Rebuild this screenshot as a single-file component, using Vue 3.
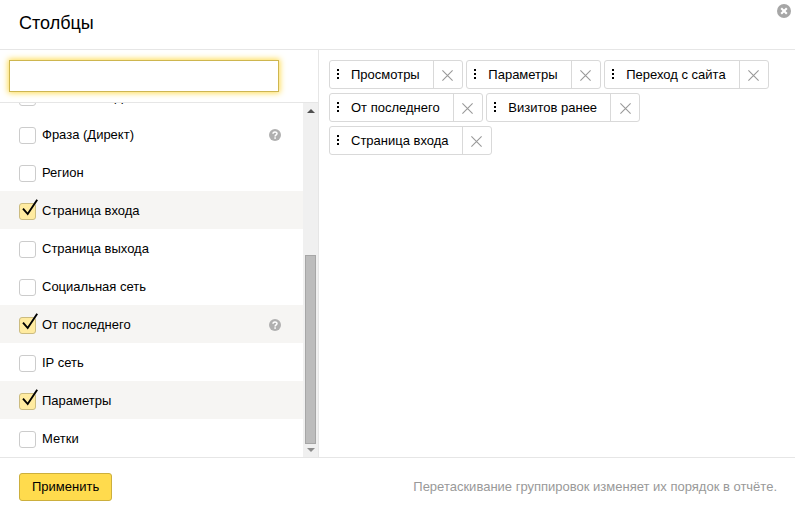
<script setup>
import { ref } from 'vue'

const query = ref('')

const options = ref([
  { label: 'Поисковая фраза', checked: false, hint: false },
  { label: 'Фраза (Директ)', checked: false, hint: true },
  { label: 'Регион', checked: false, hint: false },
  { label: 'Страница входа', checked: true, hint: false },
  { label: 'Страница выхода', checked: false, hint: false },
  { label: 'Социальная сеть', checked: false, hint: false },
  { label: 'От последнего', checked: true, hint: true },
  { label: 'IP сеть', checked: false, hint: false },
  { label: 'Параметры', checked: true, hint: false },
  { label: 'Метки', checked: false, hint: false },
])

const chips = ref([
  'Просмотры',
  'Параметры',
  'Переход с сайта',
  'От последнего',
  'Визитов ранее',
  'Страница входа',
])

function removeChip(name) {
  chips.value = chips.value.filter((c) => c !== name)
}
</script>

<template>
  <div class="dialog">
    <header class="header">
      <h1 class="title">Столбцы</h1>
      <button class="close" aria-label="Закрыть">
        <svg width="14" height="14" viewBox="0 0 14 14">
          <circle cx="7" cy="7" r="7" fill="#a6a6a6" />
          <path d="M4.2 4.2 L9.8 9.8 M9.8 4.2 L4.2 9.8" stroke="#fff" stroke-width="2.1" />
        </svg>
      </button>
    </header>

    <div class="body">
      <aside class="sidebar">
        <div class="search">
          <input v-model="query" class="search-input" type="text" />
        </div>
        <div class="scroller">
          <ul class="list">
            <li v-for="o in options" :key="o.label" class="row" :class="{ selected: o.checked }" @click="o.checked = !o.checked">
              <span class="box">
                <svg v-if="o.checked" class="tick" width="20" height="20" viewBox="0 0 20 20">
                  <path d="M4 9.6 L8.7 15 L18.2 0.8" fill="none" stroke="#000" stroke-width="1.9" />
                </svg>
              </span>
              <span class="label">{{ o.label }}</span>
              <svg v-if="o.hint" class="hint" width="12" height="12" viewBox="0 0 12 12">
                <circle cx="6" cy="6" r="6" fill="#b0b0b0" />
                <path d="M4 4.8 C4 2.3 8 2.3 8 4.6 C8 5.9 6.1 5.8 6.1 7.5" fill="none" stroke="#fff" stroke-width="1.5" />
                <rect x="5.3" y="8.3" width="1.6" height="1.5" fill="#fff" />
              </svg>
            </li>
          </ul>
          <div class="scrollbar">
            <svg class="arrow" width="8" height="4" viewBox="0 0 8 4"><path d="M0 4 L4 0 L8 4 Z" fill="#505050" /></svg>
            <div class="track"><div class="thumb"></div></div>
            <svg class="arrow" width="8" height="4" viewBox="0 0 8 4"><path d="M0 0 L8 0 L4 4 Z" fill="#8c8c8c" /></svg>
          </div>
        </div>
      </aside>

      <section class="chips">
        <div v-for="c in chips" :key="c" class="chip">
          <svg class="grip" width="2" height="10" viewBox="0 0 2 10">
            <path d="M0 0h2v2H0z M0 4h2v2H0z M0 8h2v2H0z" fill="#000" />
          </svg>
          <span class="chip-label">{{ c }}</span>
          <button class="remove" aria-label="Удалить" @click="removeChip(c)">
            <svg width="11" height="11" viewBox="0 0 11 11">
              <path d="M0.4 0.4 L10.6 10.6 M10.6 0.4 L0.4 10.6" stroke="#999" stroke-width="1.1" />
            </svg>
          </button>
        </div>
      </section>
    </div>

    <footer class="footer">
      <button class="apply">Применить</button>
      <span class="note">Перетаскивание группировок изменяет их порядок в отчёте.</span>
    </footer>
  </div>
</template>

<style>
body {
  margin: 0;
  overflow: hidden;
  background: #fff;
}
</style>

<style scoped>
.dialog {
  width: 795px;
  height: 514px;
  display: flex;
  flex-direction: column;
  background: #fff;
  color: #000;
  font: 13px/16px "Liberation Sans", Arial, sans-serif;
}
.dialog * {
  box-sizing: border-box;
}
button {
  margin: 0;
  padding: 0;
  border: 0;
  background: none;
  font: inherit;
  color: inherit;
}
.header {
  flex: none;
  height: 50px;
  padding: 4px 4px 0 19px;
  display: flex;
  justify-content: space-between;
  align-items: flex-start;
  border-bottom: 1px solid #e6e6e6;
}
.title {
  margin: 8px 0 0;
  font-size: 18px;
  line-height: 22px;
  font-weight: normal;
}
.close {
  display: flex;
}
.body {
  flex: none;
  height: 407px;
  display: flex;
}
.sidebar {
  flex: none;
  width: 319px;
  display: flex;
  flex-direction: column;
  border-right: 1px solid #e6e6e6;
}
.search {
  flex: none;
  height: 53px;
  padding: 10px 9px;
  border-bottom: 1px solid #e6e6e6;
}
.search-input {
  display: block;
  width: 270px;
  height: 32px;
  padding: 0 8px;
  border: 1px solid #ceb64f;
  border-radius: 0;
  outline: 0;
  font: inherit;
  background: #fff;
  box-shadow: 0 0 6px 1px #ffdb4d;
}
.scroller {
  flex: 1;
  min-height: 0;
  display: flex;
  overflow: hidden;
}
.list {
  flex: 1;
  margin: 0;
  padding: 0;
  list-style: none;
  display: flex;
  flex-direction: column;
  justify-content: flex-end;
}
.row {
  flex: none;
  height: 38px;
  padding: 0 22px 0 19px;
  display: flex;
  align-items: center;
}
.row.selected {
  background: #f6f5f3;
}
.box {
  flex: none;
  position: relative;
  width: 17px;
  height: 17px;
  margin-top: 3px;
  border: 1px solid #ccc;
  border-radius: 3px;
  background: #fff;
}
.selected .box {
  border-color: #ccbc80;
  background: #ffeba0;
}
.tick {
  position: absolute;
  left: -1px;
  top: -5px;
}
.label {
  flex: 1;
  margin: 2px 0 0 6px;
}
.hint {
  flex: none;
  margin-top: 2px;
}
.scrollbar {
  flex: none;
  width: 15px;
  padding: 6px 2px 5px;
  display: flex;
  flex-direction: column;
  align-items: center;
  background: #f0f0f0;
}
.arrow {
  flex: none;
}
.track {
  flex: 1;
  width: 11px;
  padding: 4px 0;
  display: flex;
  flex-direction: column;
  justify-content: flex-end;
}
.thumb {
  height: 189px;
  border: 1px solid #a6a6a6;
  background: #bcbcbc;
}
.chips {
  flex: 1;
  padding: 10px 0 0 10px;
  display: flex;
  flex-wrap: wrap;
  align-content: flex-start;
  gap: 4px 3.61px;
}
.chip {
  height: 29px;
  display: flex;
  align-items: center;
  border: 1px solid #d9d9d9;
  border-radius: 3px;
}
.grip {
  flex: none;
  margin: 0 12px 1px 7px;
}
.chip-label {
  padding-right: 13px;
  white-space: nowrap;
}
.remove {
  width: 29px;
  height: 27px;
  padding-top: 1px;
  display: flex;
  align-items: center;
  justify-content: center;
  border-left: 1px solid #d9d9d9;
}
.footer {
  flex: 1;
  padding: 0 18px 0 19px;
  display: flex;
  justify-content: space-between;
  align-items: flex-start;
  border-top: 1px solid #e6e6e6;
}
.apply {
  height: 28px;
  margin-top: 15px;
  padding: 0 12px;
  border: 1px solid #ccaf3d;
  border-radius: 3px;
  background: #ffdb4d;
}
.note {
  margin-top: 21px;
  color: #999;
}
</style>
